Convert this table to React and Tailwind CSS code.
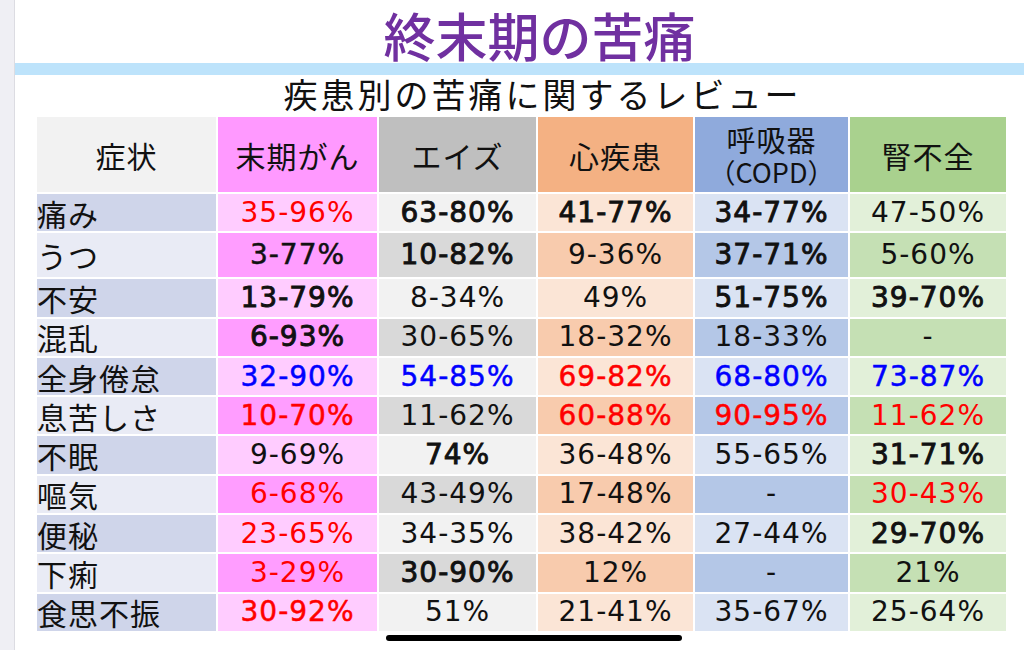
import React from "react";

const JP = { fontFamily: '"Noto Sans CJK JP", "Noto Sans", sans-serif' };
const NUM = { fontFamily: '"DejaVu Sans", "Noto Sans CJK JP", sans-serif' };

const headBg = [
  "bg-[#f2f2f2]",
  "bg-[#ff99ff]",
  "bg-[#bfbfbf]",
  "bg-[#f4b183]",
  "bg-[#8faadc]",
  "bg-[#a9d18e]",
];

const bodyBg = [
  ["bg-[#cfd5ea]", "bg-[#e9ebf5]"],
  ["bg-[#ffccff]", "bg-[#ff9dff]"],
  ["bg-[#f2f2f2]", "bg-[#d9d9d9]"],
  ["bg-[#fbe5d6]", "bg-[#f8cbad]"],
  ["bg-[#dae3f3]", "bg-[#b4c7e7]"],
  ["bg-[#e2f0d9]", "bg-[#c5e0b4]"],
];

const rows = [
  ["痛み", [["35-96%", "r", 0], ["63-80%", "k", 2], ["41-77%", "k", 2], ["34-77%", "k", 2], ["47-50%", "k", 0]]],
  ["うつ", [["3-77%", "k", 1], ["10-82%", "k", 2], ["9-36%", "k", 0], ["37-71%", "k", 2], ["5-60%", "k", 0]]],
  ["不安", [["13-79%", "k", 2], ["8-34%", "k", 0], ["49%", "k", 0], ["51-75%", "k", 2], ["39-70%", "k", 2]]],
  ["混乱", [["6-93%", "k", 2], ["30-65%", "k", 0], ["18-32%", "k", 0], ["18-33%", "k", 0], ["-", "k", 0]]],
  ["全身倦怠", [["32-90%", "b", 1], ["54-85%", "b", 1], ["69-82%", "r", 1], ["68-80%", "b", 1], ["73-87%", "b", 1]]],
  ["息苦しさ", [["10-70%", "r", 1], ["11-62%", "k", 0], ["60-88%", "r", 1], ["90-95%", "r", 1], ["11-62%", "r", 0]]],
  ["不眠", [["9-69%", "k", 0], ["74%", "k", 2], ["36-48%", "k", 0], ["55-65%", "k", 0], ["31-71%", "k", 2]]],
  ["嘔気", [["6-68%", "r", 0], ["43-49%", "k", 0], ["17-48%", "k", 0], ["-", "k", 0], ["30-43%", "r", 0]]],
  ["便秘", [["23-65%", "r", 0], ["34-35%", "k", 0], ["38-42%", "k", 0], ["27-44%", "k", 0], ["29-70%", "k", 2]]],
  ["下痢", [["3-29%", "r", 0], ["30-90%", "k", 2], ["12%", "k", 0], ["-", "k", 0], ["21%", "k", 0]]],
  ["食思不振", [["30-92%", "r", 1], ["51%", "k", 0], ["21-41%", "k", 0], ["35-67%", "k", 0], ["25-64%", "k", 0]]],
];

const colorCls = { r: "text-[#ff0000]", b: "text-[#0000ff]", k: "text-[#111111]" };
const weightCls = [
  "",
  "[-webkit-text-stroke:0.5px_currentColor]",
  "[-webkit-text-stroke:0.9px_currentColor]",
];

function Cell({ value, color, weight, bg }) {
  return (
    <div className={`${bg} flex items-center justify-center`}>
      <span
        style={NUM}
        className={`text-[28px] font-normal leading-[32px] tracking-[1px] ${colorCls[color]} ${weightCls[weight]}`}
      >
        {value}
      </span>
    </div>
  );
}

export default function App() {
  const headers = ["症状", "末期がん", "エイズ", "心疾患", null, "腎不全"];
  return (
    <div className="flex h-[650px] w-[1024px] overflow-hidden bg-white">
      <div className="h-full w-[15px] shrink-0 border-r border-[#dcdce2] bg-[#efeff4]" />
      <div className="flex min-w-0 flex-1 flex-col">
        <div className="flex justify-center pl-[40px] pt-[7px]">
          <span style={JP} className="text-[52px] font-medium leading-[56px] text-[#7030a0]">
            終末期の苦痛
          </span>
        </div>
        <div className="h-[12px] bg-[#bde3fb]" />
        <div className="flex h-[40px] items-center justify-center pb-[2px] pl-[46px]">
          <span style={JP} className="text-[34px] leading-[38px] tracking-[3px] text-[#111]">
            疾患別の苦痛に関するレビュー
          </span>
        </div>
        <div className="ml-[22px] mt-[2px] grid w-[969px] grid-cols-[179px_159px_157px_155px_153px_156px] grid-rows-[75px_37.3px_44px_repeat(9,37.3px)] gap-[2px]">
          {headers.map((h, i) => (
            <div key={i} className={`${headBg[i]} flex flex-col items-center justify-center`}>
              {h ? (
                <span style={JP} className="text-[30px] leading-[36px] tracking-[1px] text-[#111]">
                  {h}
                </span>
              ) : (
                <>
                  <span style={JP} className="text-[29px] leading-[33px] tracking-[1px] text-[#111]">
                    呼吸器
                  </span>
                  <span style={JP} className="text-[27px] leading-[31px] text-[#111]">
                    （COPD）
                  </span>
                </>
              )}
            </div>
          ))}
          {rows.map(([label, cells], ri) => {
            const p = ri % 2;
            return (
              <React.Fragment key={label}>
                <div className={`${bodyBg[0][p]} flex items-center`}>
                  <span style={JP} className="text-[30px] leading-[34px] tracking-[1px] text-[#111]">
                    {label}
                  </span>
                </div>
                {cells.map(([v, c, w], ci) => (
                  <Cell key={ci} value={v} color={c} weight={w} bg={bodyBg[ci + 1][p]} />
                ))}
              </React.Fragment>
            );
          })}
        </div>
        <div className="ml-[371px] mt-[4px] h-[6px] w-[296px] rounded-full bg-black" />
      </div>
    </div>
  );
}
